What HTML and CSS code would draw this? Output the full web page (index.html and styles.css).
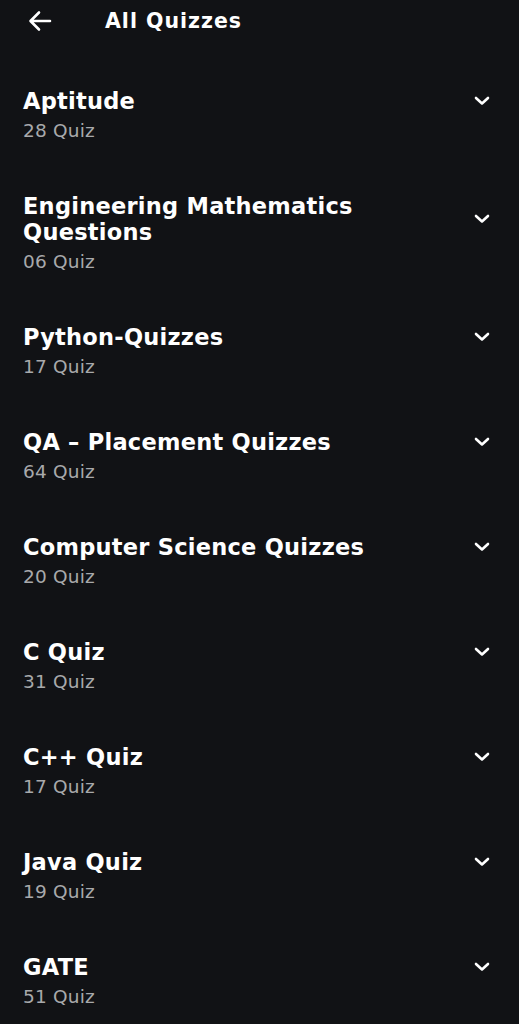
FILE: index.html
```html
<!DOCTYPE html>
<html>
<head>
<meta charset="utf-8">
<link rel="stylesheet" href="styles.css">
</head>
<body>
<header class="topbar">
  <svg class="back" width="24" height="22" viewBox="0 0 24 22"><path d="M22 11H3M11 2.5L2.5 11 11 19.5" fill="none" stroke="#fff" stroke-width="2.6" stroke-linecap="round" stroke-linejoin="round"/></svg>
  <h1 class="title">All Quizzes</h1>
</header>
<ul class="list">
  <li class="item"><div class="text"><div class="name">Aptitude</div><div class="count">28 Quiz</div></div><svg class="chev" width="16" height="10" viewBox="0 0 16 10"><path d="M2 2l6 5.5L14 2" fill="none" stroke="#fff" stroke-width="2.6" stroke-linecap="round" stroke-linejoin="round"/></svg></li>
  <li class="item"><div class="text"><div class="name">Engineering Mathematics Questions</div><div class="count">06 Quiz</div></div><svg class="chev" width="16" height="10" viewBox="0 0 16 10"><path d="M2 2l6 5.5L14 2" fill="none" stroke="#fff" stroke-width="2.6" stroke-linecap="round" stroke-linejoin="round"/></svg></li>
  <li class="item"><div class="text"><div class="name">Python-Quizzes</div><div class="count">17 Quiz</div></div><svg class="chev" width="16" height="10" viewBox="0 0 16 10"><path d="M2 2l6 5.5L14 2" fill="none" stroke="#fff" stroke-width="2.6" stroke-linecap="round" stroke-linejoin="round"/></svg></li>
  <li class="item"><div class="text"><div class="name">QA – Placement Quizzes</div><div class="count">64 Quiz</div></div><svg class="chev" width="16" height="10" viewBox="0 0 16 10"><path d="M2 2l6 5.5L14 2" fill="none" stroke="#fff" stroke-width="2.6" stroke-linecap="round" stroke-linejoin="round"/></svg></li>
  <li class="item"><div class="text"><div class="name">Computer Science Quizzes</div><div class="count">20 Quiz</div></div><svg class="chev" width="16" height="10" viewBox="0 0 16 10"><path d="M2 2l6 5.5L14 2" fill="none" stroke="#fff" stroke-width="2.6" stroke-linecap="round" stroke-linejoin="round"/></svg></li>
  <li class="item"><div class="text"><div class="name">C Quiz</div><div class="count">31 Quiz</div></div><svg class="chev" width="16" height="10" viewBox="0 0 16 10"><path d="M2 2l6 5.5L14 2" fill="none" stroke="#fff" stroke-width="2.6" stroke-linecap="round" stroke-linejoin="round"/></svg></li>
  <li class="item"><div class="text"><div class="name">C++ Quiz</div><div class="count">17 Quiz</div></div><svg class="chev" width="16" height="10" viewBox="0 0 16 10"><path d="M2 2l6 5.5L14 2" fill="none" stroke="#fff" stroke-width="2.6" stroke-linecap="round" stroke-linejoin="round"/></svg></li>
  <li class="item"><div class="text"><div class="name">Java Quiz</div><div class="count">19 Quiz</div></div><svg class="chev" width="16" height="10" viewBox="0 0 16 10"><path d="M2 2l6 5.5L14 2" fill="none" stroke="#fff" stroke-width="2.6" stroke-linecap="round" stroke-linejoin="round"/></svg></li>
  <li class="item"><div class="text"><div class="name">GATE</div><div class="count">51 Quiz</div></div><svg class="chev" width="16" height="10" viewBox="0 0 16 10"><path d="M2 2l6 5.5L14 2" fill="none" stroke="#fff" stroke-width="2.6" stroke-linecap="round" stroke-linejoin="round"/></svg></li>
</ul>
</body>
</html>
```
FILE: styles.css
```css
html, body {
  margin: 0;
  padding: 0;
  background: #111215;
  color: #fff;
  font-family: "DejaVu Sans", "Liberation Sans", sans-serif;
}
.topbar {
  display: flex;
  align-items: center;
  height: 42px;
  padding-left: 28px;
}
.back {
  display: block;
  flex: none;
}
.title {
  margin: 0 0 0 53px;
  font-size: 20.5px;
  font-weight: 700;
  letter-spacing: 1px;
  line-height: 44px;
}
.list {
  list-style: none;
  margin: 0;
  padding: 21px 0 0 0;
}
.item {
  display: flex;
  align-items: center;
  padding: 25px 29px 26px 23px;
}
.text {
  flex: 1;
  min-width: 0;
}
.name {
  font-size: 22.5px;
  font-weight: 700;
  letter-spacing: 0.25px;
  line-height: 26px;
}
.count {
  margin-top: 6px;
  font-size: 18.5px;
  letter-spacing: 0.2px;
  line-height: 22px;
  color: #a8a9ab;
}
.chev {
  display: block;
  flex: none;
  margin-top: -28px;
}
```
